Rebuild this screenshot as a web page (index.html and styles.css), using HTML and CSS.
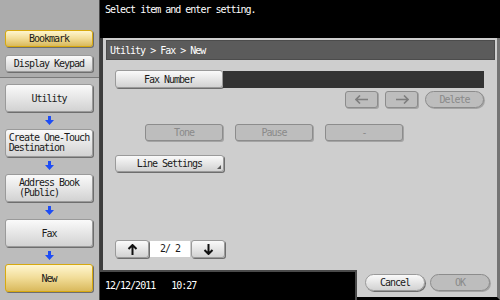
FILE: index.html
```html
<!DOCTYPE html>
<html>
<head>
  <title>Utility - Fax - New</title>
  <link rel="stylesheet" href="styles.css">
</head>
<body>

  <div class="screen">

    <!-- left column: bookmarks + breadcrumb steps -->
    <div class="sidebar">
      <div class="side-top">
        <div class="btn btn-yellow">Bookmark</div>
        <div class="btn">Display Keypad</div>
      </div>
      <div class="side-flow">
        <div class="btn step">Utility</div>
        <div class="step-arrow"><svg width="9" height="9" viewBox="0 0 9 9"><path d="M3 0h3v4h3L4.5 9 0 4h3z"/></svg></div>
        <div class="btn step"><span class="lines">Create One-Touch<br>Destination</span></div>
        <div class="step-arrow"><svg width="9" height="9" viewBox="0 0 9 9"><path d="M3 0h3v4h3L4.5 9 0 4h3z"/></svg></div>
        <div class="btn step"><span class="lines">Address Book<br>(Public)</span></div>
        <div class="step-arrow"><svg width="9" height="9" viewBox="0 0 9 9"><path d="M3 0h3v4h3L4.5 9 0 4h3z"/></svg></div>
        <div class="btn step">Fax</div>
        <div class="step-arrow"><svg width="9" height="9" viewBox="0 0 9 9"><path d="M3 0h3v4h3L4.5 9 0 4h3z"/></svg></div>
        <div class="btn step btn-yellow">New</div>
      </div>
    </div>

    <div class="main">
      <div class="message">Select item and enter setting.</div>

      <div class="panel">
        <div class="crumb">Utility &gt; Fax &gt; New</div>

        <div class="fax-row">
          <div class="btn fax-label">Fax Number</div>
          <div class="fax-field"></div>
        </div>

        <div class="edit-row">
          <div class="btn off cursor-btn"><svg width="14" height="9" viewBox="0 0 14 9"><path d="M5 0.5 1 4.5l4 4M1 4.5h12" fill="none" stroke="#7e7e7e" stroke-width="1.6"/></svg></div>
          <div class="btn off cursor-btn"><svg width="14" height="9" viewBox="0 0 14 9"><path d="M9 0.5l4 4-4 4M13 4.5H1" fill="none" stroke="#7e7e7e" stroke-width="1.6"/></svg></div>
          <div class="btn off pill delete-btn">Delete</div>
        </div>

        <div class="dial-row">
          <div class="btn off dial-btn">Tone</div>
          <div class="btn off dial-btn">Pause</div>
          <div class="btn off dial-btn">-</div>
        </div>

        <div class="btn line-btn">Line Settings</div>

        <div class="pager">
          <div class="btn page-btn"><svg width="11" height="11" viewBox="0 0 11 11"><path d="M5.5 1v10M1.5 5 5.5 1l4 4" fill="none" stroke="#111" stroke-width="2"/></svg></div>
          <div class="page-count">2/ 2</div>
          <div class="btn page-btn"><svg width="11" height="11" viewBox="0 0 11 11"><path d="M5.5 0v10M1.5 6l4 4 4-4" fill="none" stroke="#111" stroke-width="2"/></svg></div>
        </div>
      </div>

      <div class="footer">
        <div class="status">
          <span>12/12/2011</span>
          <span>10:27</span>
        </div>
        <div class="actions">
          <div class="btn pill action-btn">Cancel</div>
          <div class="btn pill off action-btn">OK</div>
        </div>
      </div>
    </div>

  </div>

</body>
</html>
```

FILE: styles.css
```css
body {
  margin: 0;
  font-family: "DejaVu Sans Mono", monospace;
  font-size: 10px;
  letter-spacing: -1px;
  color: #1a1a1a;
  background: #000;
}

.screen {
  width: 500px;
  height: 300px;
  display: flex;
  overflow: hidden;
}

/* ---------- buttons ---------- */
.btn {
  box-sizing: border-box;
  display: flex;
  align-items: center;
  justify-content: center;
  background: linear-gradient(#fafafa, #e4e4e4 55%, #d2d2d2);
  border: 1px solid #9a9a9a;
  border-radius: 3px;
  box-shadow: 1px 1px 0 #6e6e6e;
  white-space: pre;
}

.btn-yellow {
  background: linear-gradient(#fff6cf, #f1dc97 50%, #d9b95c);
  border-color: #d7a90f;
}

.btn.off {
  background: #bdbdbd;
  border-color: #8c8c8c;
  color: #8a8a8a;
  box-shadow: 1px 1px 0 #a4a4a4;
}

.pill {
  border-radius: 9px;
}

/* ---------- sidebar ---------- */
.sidebar {
  width: 100px;
  flex: none;
  box-sizing: border-box;
  border-right: 1px solid #4a4a4a;
  background: #bcbcbc;
}

.side-top {
  height: 78px;
  box-sizing: border-box;
  padding: 30px 6px 0 5px;
  background: #acacac;
  border-bottom: 1px solid #7a7a7a;
  display: flex;
  flex-direction: column;
  gap: 8px;
}

.side-top .btn {
  height: 17px;
}

.side-flow {
  padding: 6px 6px 0 5px;
  display: flex;
  flex-direction: column;
}

.step {
  height: 28px;
}

.lines {
  line-height: 10px;
  text-align: left;
}

.step-arrow {
  height: 17px;
  display: flex;
  align-items: center;
  justify-content: center;
}

.step-arrow svg {
  fill: #1d4cf5;
}

/* ---------- main area ---------- */
.main {
  flex: 1;
  display: flex;
  flex-direction: column;
}

.message {
  height: 38px;
  box-sizing: border-box;
  padding: 4px 0 0 5px;
  color: #fff;
}

.panel {
  height: 232px;
  box-sizing: border-box;
  background: #cecece;
  border-left: 3px solid #3c3c3c;
  border-right: 3px solid #747474;
  padding: 2px 2px 0 3px;
  display: flex;
  flex-direction: column;
}

.crumb {
  height: 20px;
  box-sizing: border-box;
  background: #5b5b5b;
  border: 1px solid #4c4c4c;
  color: #fff;
  padding: 4px 0 0 3px;
}

.fax-row {
  display: flex;
  margin: 10px 11px 0 9px;
  height: 18px;
}

.fax-label {
  width: 108px;
  height: 18px;
}

.fax-field {
  flex: 1;
  margin-top: 1px;
  background: #333;
}

.edit-row {
  display: flex;
  justify-content: flex-end;
  gap: 7px;
  margin: 3px 11px 0 0;
}

.cursor-btn {
  width: 33px;
  height: 17px;
}

.delete-btn {
  width: 59px;
  height: 17px;
}

.dial-row {
  display: flex;
  gap: 12px;
  margin: 16px 0 0 39px;
}

.dial-btn {
  width: 78px;
  height: 17px;
}

.line-btn {
  position: relative;
  width: 109px;
  height: 17px;
  margin: 14px 0 0 9px;
}

/* little corner mark on buttons that open a sub screen */
.line-btn::after {
  content: "";
  position: absolute;
  right: 2px;
  bottom: 2px;
  border-left: 4px solid transparent;
  border-bottom: 4px solid #5a5a5a;
}

.pager {
  display: flex;
  align-items: center;
  margin: auto 0 12px 9px;
}

.page-btn {
  width: 34px;
  height: 18px;
}

.page-count {
  width: 40px;
  height: 16px;
  margin: 0 1px 0 1px;
  background: #fff;
  line-height: 16px;
  text-align: center;
}

/* ---------- footer ---------- */
.footer {
  height: 30px;
  display: flex;
}

.status {
  width: 257px;
  box-sizing: border-box;
  border-top: 2px solid #4a4a4a;
  border-right: 2px solid #4a4a4a;
  color: #fff;
  padding: 8px 0 0 5px;
  display: flex;
  gap: 16px;
}

.actions {
  flex: 1;
  box-sizing: border-box;
  background: #cecece;
  border-right: 3px solid #747474;
  border-bottom: 3px solid #000;
  padding: 4px 0 0 8px;
  display: flex;
  gap: 5px;
}

.action-btn {
  width: 60px;
  height: 17px;
}
```
